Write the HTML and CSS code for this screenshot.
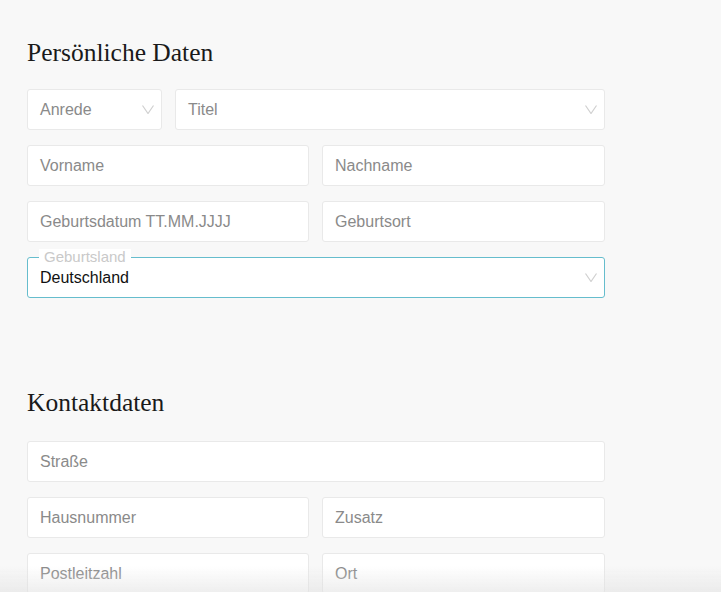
FILE: index.html
```html
<!DOCTYPE html>
<html lang="de">
<head>
<meta charset="utf-8">
<link rel="stylesheet" href="styles.css">
</head>
<body>
<div class="page">
  <section class="section first">
    <h2 class="title">Persönliche Daten</h2>
    <div class="row row-title">
      <div class="field select"><span class="ph">Anrede</span><svg class="chev" viewBox="0 0 12 9"><path d="M0.5 0.5 L6 8.5 L11.5 0.5"/></svg></div>
      <div class="field select"><span class="ph">Titel</span><svg class="chev" viewBox="0 0 12 9"><path d="M0.5 0.5 L6 8.5 L11.5 0.5"/></svg></div>
    </div>
    <div class="row row-half">
      <div class="field"><span class="ph">Vorname</span></div>
      <div class="field"><span class="ph">Nachname</span></div>
    </div>
    <div class="row row-half">
      <div class="field"><span class="ph">Geburtsdatum TT.MM.JJJJ</span></div>
      <div class="field"><span class="ph">Geburtsort</span></div>
    </div>
    <div class="row">
      <div class="field select focus"><span class="legend">Geburtsland</span><span class="val">Deutschland</span><svg class="chev" viewBox="0 0 12 9"><path d="M0.5 0.5 L6 8.5 L11.5 0.5"/></svg></div>
    </div>
  </section>
  <section class="section second">
    <h2 class="title">Kontaktdaten</h2>
    <div class="row">
      <div class="field"><span class="ph">Straße</span></div>
    </div>
    <div class="row row-half">
      <div class="field"><span class="ph">Hausnummer</span></div>
      <div class="field"><span class="ph">Zusatz</span></div>
    </div>
    <div class="row row-half">
      <div class="field"><span class="ph">Postleitzahl</span></div>
      <div class="field"><span class="ph">Ort</span></div>
    </div>
  </section>
</div>
<div class="fade"></div>
</body>
</html>
```

FILE: styles.css
```css
html, body {
  margin: 0;
  padding: 0;
  background: #f8f8f8;
  font-family: "Liberation Sans", Arial, sans-serif;
}
.page {
  width: 578px;
  padding-left: 27px;
}
.section {
  display: flex;
  flex-direction: column;
  gap: 15px;
}
.section.first {
  padding-top: 35px;
}
.section.second {
  padding-top: 87px;
}
.title {
  margin: 0 0 4px 0;
  font-family: "Liberation Serif", Georgia, serif;
  font-weight: normal;
  font-size: 25.5px;
  line-height: 35px;
  color: #1a1a1a;
}
.second .title {
  margin-bottom: 6px;
}
.row {
  display: grid;
  grid-template-columns: 1fr;
  gap: 13px;
}
.row-title {
  grid-template-columns: 135px 1fr;
}
.row-half {
  grid-template-columns: 282px 1fr;
}
.field {
  position: relative;
  box-sizing: border-box;
  height: 41px;
  background: #fff;
  border: 1px solid #e9e9e9;
  border-radius: 3px;
  display: flex;
  align-items: center;
  padding: 0 12px;
  font-size: 16px;
}
.ph {
  color: #8a8a8a;
}
.val {
  color: #111;
}
.chev {
  position: absolute;
  right: 7px;
  top: 15px;
  width: 12px;
  height: 9px;
  fill: none;
  stroke: #d0d0d0;
  stroke-width: 1.2;
}
.field.focus {
  border: 1px solid #66bdcd;
}
.legend {
  position: absolute;
  left: 11px;
  top: -9px;
  padding: 0 5px;
  background: #fff;
  font-size: 15px;
  line-height: 16px;
  color: #c9c9c9;
}
.fade {
  position: fixed;
  left: 0;
  right: 0;
  bottom: 0;
  height: 26px;
  background: linear-gradient(to bottom, rgba(225,225,225,0), rgba(225,225,225,0.55));
  pointer-events: none;
}
```
